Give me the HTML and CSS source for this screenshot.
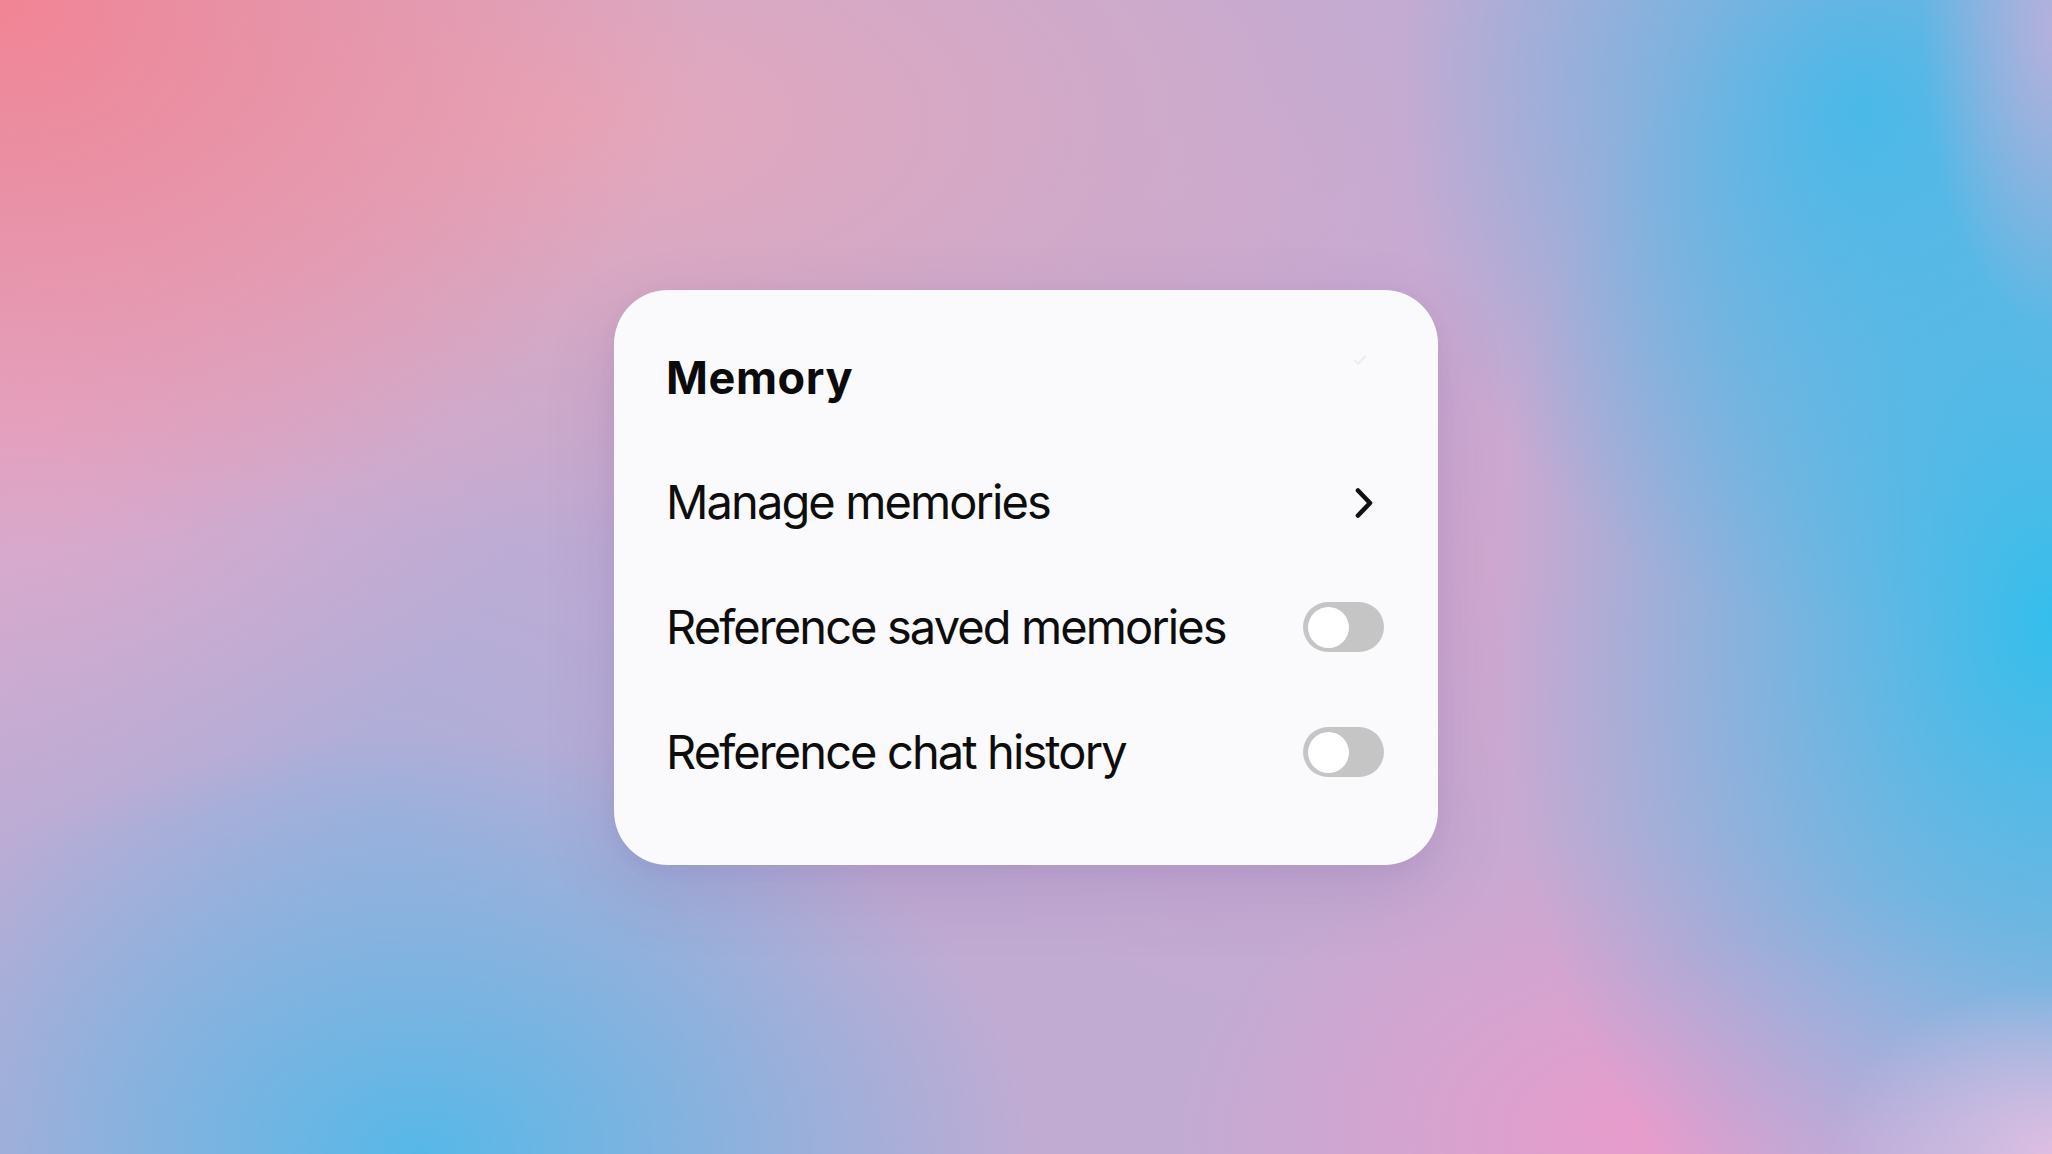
FILE: index.html
```html
<!DOCTYPE html>
<html lang="en">
<head>
<meta charset="utf-8">
<title>Memory</title>
<link rel="stylesheet" href="styles.css">
</head>
<body>
  <main class="stage">
    <section class="panel">
      <header class="panel-head">
        <h1 class="panel-title">Memory</h1>
        <svg class="ghost-check" viewBox="0 0 16 16" width="16" height="16" aria-hidden="true">
          <path d="M3 8.5l3.2 3.2L13 4.5" fill="none" stroke="currentColor" stroke-width="2" stroke-linecap="round" stroke-linejoin="round"/>
        </svg>
      </header>

      <div class="row">
        <span class="row-label">Manage memories</span>
        <svg class="chevron" viewBox="0 0 24 32" width="24" height="32" aria-hidden="true">
          <path d="M6 3.5L18 16L6 28.5" fill="none" stroke="currentColor" stroke-width="4.6" stroke-linecap="round" stroke-linejoin="round"/>
        </svg>
      </div>

      <div class="row">
        <span class="row-label">Reference saved memories</span>
        <span class="switch" role="switch" aria-checked="false"><span class="knob"></span></span>
      </div>

      <div class="row">
        <span class="row-label">Reference chat history</span>
        <span class="switch" role="switch" aria-checked="false"><span class="knob"></span></span>
      </div>
    </section>
  </main>
</body>
</html>
```
FILE: styles.css
```css
html, body {
  margin: 0;
  padding: 0;
  width: 100%;
  height: 100%;
}

body {
  font-family: Inter, "Noto Sans", "Liberation Sans", sans-serif;
  color: #0d0d0d;
  background-color: #c2abd3;
  background-image:
    radial-gradient(ellipse 130px 300px at 2052px 30px, rgba(180, 176, 220, 1) 0%, rgba(180, 176, 220, 0) 100%),
    radial-gradient(ellipse 220px 170px at 2052px 1154px, rgba(222, 190, 226, 1) 0%, rgba(222, 190, 226, 0) 100%),
    radial-gradient(ellipse 700px 560px at 0px 0px, rgba(242, 132, 148, 1) 0%, rgba(242, 132, 148, 0) 100%),
    radial-gradient(ellipse 900px 420px at 560px 120px, rgba(236, 166, 182, 0.85) 0%, rgba(236, 166, 182, 0) 100%),
    radial-gradient(ellipse 520px 420px at 20px 420px, rgba(232, 168, 200, 0.8) 0%, rgba(232, 168, 200, 0) 100%),
    radial-gradient(ellipse 560px 760px at 2052px 620px, rgba(52, 190, 236, 1) 0%, rgba(52, 190, 236, 0) 100%),
    radial-gradient(ellipse 460px 520px at 1860px 110px, rgba(74, 184, 232, 0.95) 0%, rgba(74, 184, 232, 0) 100%),
    radial-gradient(ellipse 620px 420px at 420px 1154px, rgba(86, 184, 232, 1) 0%, rgba(86, 184, 232, 0) 100%),
    radial-gradient(ellipse 460px 300px at 1640px 1130px, rgba(232, 156, 204, 1) 0%, rgba(232, 156, 204, 0) 100%),
    radial-gradient(ellipse 320px 260px at 1900px 1154px, rgba(234, 178, 218, 0.85) 0%, rgba(234, 178, 218, 0) 100%),
    radial-gradient(ellipse 700px 500px at 1500px 560px, rgba(214, 166, 206, 0.7) 0%, rgba(214, 166, 206, 0) 100%),
    radial-gradient(ellipse 500px 380px at 380px 820px, rgba(160, 176, 220, 0.7) 0%, rgba(160, 176, 220, 0) 100%);
}

.stage {
  width: 100%;
  height: 100%;
  display: flex;
  align-items: center;
  justify-content: center;
}

.panel {
  position: relative;
  box-sizing: border-box;
  width: 824px;
  height: 575px;
  padding: 26px 54px 50px 52px;
  border-radius: 54px;
  background: #faf9fb;
  box-shadow: 0 24px 70px rgba(90, 70, 140, 0.16), 0 4px 18px rgba(90, 70, 140, 0.06);
  display: flex;
  flex-direction: column;
}

.panel-head {
  height: 125px;
  display: flex;
  align-items: center;
  justify-content: space-between;
}

.panel-title {
  margin: 0;
  font-size: 45px;
  font-weight: 700;
  line-height: 1.2;
  letter-spacing: 0.6px;
  color: #0b0b0b;
}

.ghost-check {
  position: absolute;
  top: 62px;
  right: 70px;
  color: #ecebee;
}

.row {
  height: 125px;
  display: flex;
  align-items: center;
  justify-content: space-between;
}

.row-label {
  font-size: 47px;
  font-weight: 400;
  line-height: 1.2;
  letter-spacing: -1.9px;
  color: #0d0d0d;
}

.chevron {
  color: #111;
  margin-right: 8px;
}

.switch {
  box-sizing: border-box;
  width: 81px;
  height: 50px;
  padding: 4.5px;
  border-radius: 25px;
  background: #c5c5c5;
  display: flex;
  align-items: center;
}

.knob {
  width: 41px;
  height: 41px;
  border-radius: 50%;
  background: #ffffff;
}
```
